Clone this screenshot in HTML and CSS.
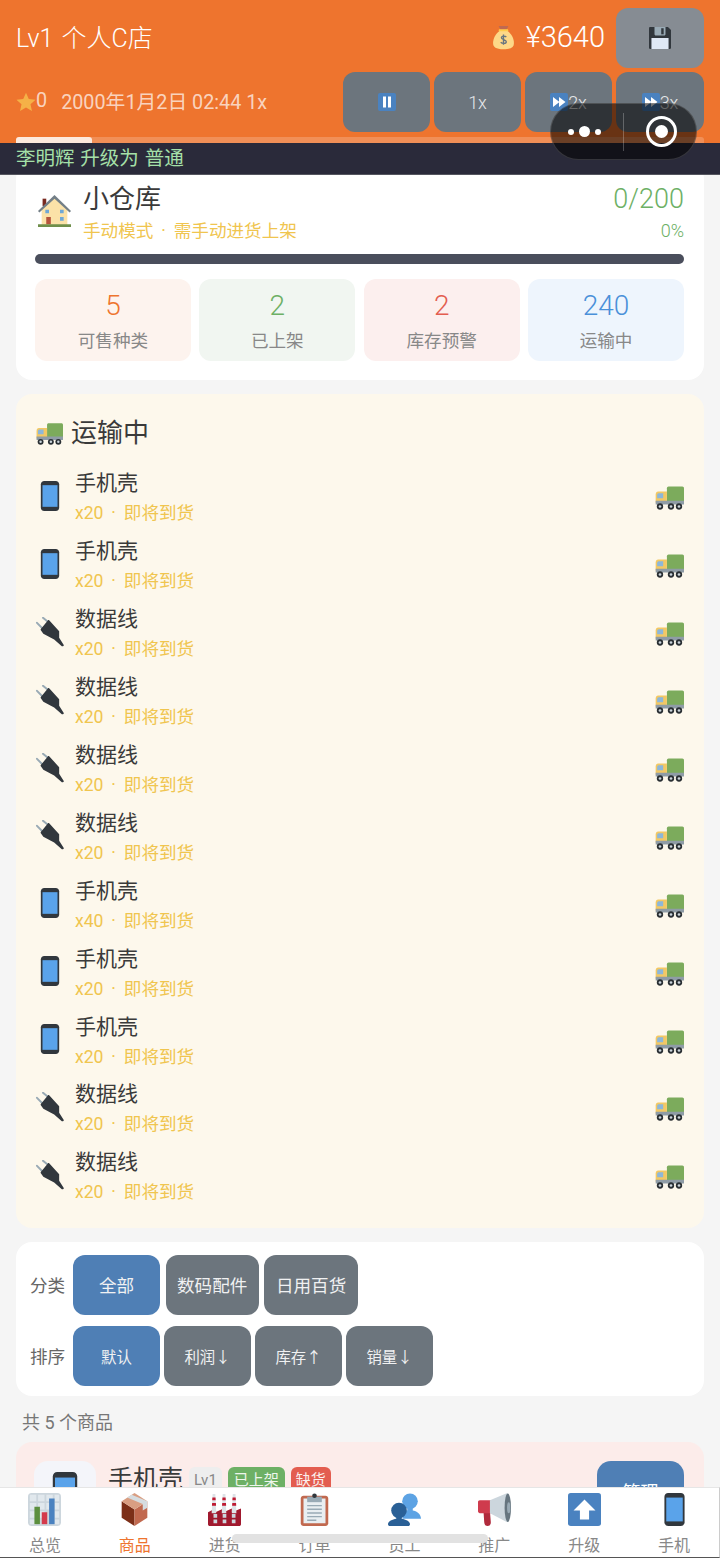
FILE: index.html
```html
<!DOCTYPE html>
<html lang="zh-CN">
<head>
    <meta charset="UTF-8">
    <meta name="viewport" content="width=device-width, initial-scale=1.0">
    <title>Lv1 个人C店</title>
    <link rel="stylesheet" href="styles.css">
</head>
<body>
    <svg class="sprites" xmlns="http://www.w3.org/2000/svg">
        <symbol id="i-phone" viewBox="0 0 36 36">
            <path fill="#31373D" d="M11 36c-2.200 0-4-1.800-4-4V4c0-2.200 1.800-4 4-4h14c2.200 0 4 1.800 4 4v28c0 2.200-1.800 4-4 4H11z"/>
            <path fill="#5AA3EA" d="M9 5h18v26H9z"/>
        </symbol>
        <symbol id="i-plug" viewBox="0 0 36 36">
            <path fill="none" stroke="#99AAB5" stroke-width="2.4" stroke-linecap="round" d="M2.400 7 12 16.800M9.600 1 16.800 7"/>
            <path fill="#31373D" d="M17 4 29 17v8l5.500 8.500c.5.8-1.500 2.200-2.300 1.500L23 27 10 20l-3-4c-.4-.6-.4-1.200 0-1.600L15.400 4.200c.5-.6 1.100-.6 1.600-.2z"/>
        </symbol>
        <symbol id="i-truck" viewBox="0 0 36 36">
            <path fill="#7CAB5C" d="M17.500 5.500H34c1.100 0 2 .9 2 2V25H15.500V7.500c0-1.100.9-2 2-2z"/>
            <path fill="#F2C864" d="M5 11.500h10.500V25H2v-10c0-2 1.200-3.500 3-3.500z"/>
            <path fill="#8DB7D9" d="M5.500 13.500h5.500v6H3.800v-3.500c0-1.200.6-2.500 1.700-2.500z"/>
            <path fill="#8F9CA6" d="M2 22.500h34V27H2z"/>
            <g fill="#292F33"><circle cx="7.200" cy="29.400" r="3.800"/><circle cx="20.400" cy="29.400" r="3.800"/><circle cx="30" cy="29.400" r="3.800"/></g>
            <g fill="#CCD6DD"><circle cx="7.200" cy="29.400" r="1.600"/><circle cx="20.400" cy="29.400" r="1.600"/><circle cx="30" cy="29.400" r="1.600"/></g>
        </symbol>
        <symbol id="i-house" viewBox="0 0 36 36">
            <path fill="#FBE2A8" d="M4 16 18 3l14 13v17H4z"/>
            <path fill="#7A2A20" d="M5 4h4v8H5z"/>
            <path fill="#737F87" d="M18 0 0 17.500l1.500 1.700L18 4l16.500 15.200 1.500-1.700z"/>
            <g fill="#6FA8D6"><path d="M8 16h4v4H8zM24 16h4v4h-4zM24 24h4v4h-4z"/></g>
            <path fill="#B5533C" d="M9 24h5v8H9z"/>
            <path fill="#6F8F4B" d="M0 32h36v3H0z"/>
        </symbol>
        <symbol id="i-money" viewBox="0 0 36 36">
            <path fill="#FDD888" d="M13 8h10c6 4 10 11 10 18 0 6-4 9-15 9S3 32 3 26c0-7 4-14 10-18z"/>
            <path fill="#BF6952" d="M12 1.500h12c.8 0 1 1 .5 1.500L22 7H14l-2.500-4c-.5-.5-.3-1.500.5-1.500z"/>
            <path fill="#FFCC4D" d="M12.500 6h11c.8 0 1.500.7 1.500 1.500S24.300 9 23.500 9h-11C11.700 9 11 8.300 11 7.500S11.700 6 12.500 6z"/>
            <path fill="none" stroke="#67757F" stroke-width="2" d="M22 17.500c-1-1.500-6.500-2.500-7 .8-.4 3.200 7 2.200 7 5.700 0 3.300-6 3-8 1M18 13.500v15"/>
        </symbol>
        <symbol id="i-floppy" viewBox="0 0 36 36">
            <path fill="#31373D" d="M2 0h29l5 5v29c0 1.100-.9 2-2 2H2c-1.100 0-2-.9-2-2V2C0 .9.900 0 2 0z"/>
            <path fill="#99AAB5" d="M9 0h18v12c0 1.100-.9 2-2 2H11c-1.100 0-2-.9-2-2z"/>
            <path fill="#31373D" d="M20 2h4v10h-4z"/>
            <path fill="#DFE8F5" d="M4 18h28v18H4z"/>
        </symbol>
        <symbol id="i-pause" viewBox="0 0 36 36">
            <rect width="36" height="36" rx="4" fill="#4A82C0"/>
            <path fill="#fff" d="M10 7h6v22h-6zM20 7h6v22h-6z"/>
        </symbol>
        <symbol id="i-fast" viewBox="0 0 36 36">
            <rect width="36" height="36" rx="4" fill="#4A82C0"/>
            <path fill="#fff" d="M6 8l13 10L6 28zM18 8l13 10-13 10z"/>
        </symbol>
        <symbol id="i-star" viewBox="0 0 36 36">
            <path fill="#F7BC4C" d="M18 1.500l5 11.200 12.200 1.300-9.100 8.200 2.600 12L18 28l-10.700 6.200 2.600-12L.8 14 13 12.700z"/>
        </symbol>
        <symbol id="i-chart" viewBox="0 0 36 36">
            <rect width="36" height="36" rx="4" fill="#CCD6DD"/>
            <path fill="#E1E8ED" d="M2 2h7v7H2zM11 2h7v7h-7zM20 2h7v7h-7zM29 2h5v7h-5zM2 11h7v7H2zM11 11h7v7h-7zM20 11h7v7h-7zM29 11h5v7h-5zM2 20h7v7H2zM11 20h7v7h-7zM29 20h5v7h-5zM2 29h7v5H2zM29 29h5v5h-5z"/>
            <path fill="#5C8F3F" d="M7 15h6v19H7z"/>
            <path fill="#D43A4C" d="M15 21h6v13h-6z"/>
            <path fill="#4A82C0" d="M23 6h6v28h-6z"/>
        </symbol>
        <symbol id="i-box" viewBox="0 0 36 36">
            <path fill="#7C2F18" d="M18 36 4 27V9l14 9z"/>
            <path fill="#C1694F" d="M18 36l14-9V9l-14 9z"/>
            <path fill="#D99E82" d="M18 0 4 9l14 9 14-9z"/>
            <path fill="#D5DCE0" d="M10 5 15 2l17 7v7l-5 3v-7z"/>
        </symbol>
        <symbol id="i-factory" viewBox="0 0 36 36">
            <path fill="#A0192E" d="M0 21l8-4v4l9-4v4l9-4v4l10-4v17c0 1.100-.9 2-2 2H2c-1.100 0-2-.9-2-2z"/>
            <path fill="#DDE3E7" d="M5 1h3l1 21H4zM16 1h3l1 21h-5zM27 1h3l1 21h-5z"/>
            <path fill="#BE1931" d="M4.800 5h3.400l.2 3H4.600zM4.500 11h4.100l.2 3H4.300zM15.800 5h3.400l.2 3h-3.800zM15.500 11h4.100l.2 3h-4.500zM26.800 5h3.400l.2 3h-3.800zM26.500 11h4.100l.2 3h-4.500z"/>
            <path fill="#CCD6DD" d="M6 23h4v4H6zM16 23h4v4h-4zM26 23h4v4h-4zM6 29h4v4H6zM16 29h4v4h-4zM26 29h4v4h-4z"/>
        </symbol>
        <symbol id="i-clip" viewBox="0 0 36 36">
            <path fill="#C1694F" d="M6 3h24c1.700 0 3 1.300 3 3v27c0 1.700-1.300 3-3 3H6c-1.700 0-3-1.300-3-3V6c0-1.700 1.300-3 3-3z"/>
            <path fill="#E9EEF1" d="M6 6h24v27H6z"/>
            <path fill="#99AAB5" d="M10 4h16v6H10z"/>
            <circle cx="18" cy="3" r="2.500" fill="#31373D"/>
            <path fill="#99AAB5" d="M10 13h16v1.500H10zM10 17h16v1.500H10zM10 21h16v1.500H10zM10 25h16v1.500H10zM10 29h10v1.500H10z"/>
        </symbol>
        <symbol id="i-people" viewBox="0 0 36 36">
            <circle cx="24" cy="9" r="8.500" fill="#5DA3E4"/>
            <path fill="#5DA3E4" d="M21 14h6v5c4 .7 9 3.500 9 9H16c0-5 2-8.500 5-9z"/>
            <circle cx="12" cy="19" r="8.500" fill="#2A6096"/>
            <path fill="#2A6096" d="M9 24h6v4c4 .7 9 2.500 9 6 0 1.100-.9 2-2 2H2c-1.100 0-2-.9-2-2 0-3.500 5-5.300 9-6z"/>
        </symbol>
        <symbol id="i-horn" viewBox="0 0 36 36">
            <path fill="#B02A3C" d="M6 20h7l1 12c.2 2-1 4-3.500 4S7 34.500 6.800 32z"/>
            <path fill="#CF3B4D" d="M2 8h13v14H2c-1.100 0-2-.9-2-2V10c0-1.100.9-2 2-2z"/>
            <path fill="#CCD6DD" d="M13 8 32 0v32L13 22z"/>
            <ellipse cx="32.500" cy="16" rx="3.500" ry="15.500" fill="#66757F"/>
            <ellipse cx="33.500" cy="16" rx="1.800" ry="6" fill="#99AAB5"/>
        </symbol>
        <symbol id="i-up" viewBox="0 0 36 36">
            <rect width="36" height="36" rx="3" fill="#4A82C0"/>
            <path fill="#fff" d="M18 7 30 19h-7v10H13V19H6z"/>
        </symbol>
    </svg>

    <header class="topbar">
        <div class="topbar-row">
            <div class="shop-name">Lv1 个人C店</div>
            <div class="money"><svg class="emoji money-icon"><use href="#i-money"/></svg><span>¥3640</span></div>
            <button class="ctl-btn save-btn"><svg class="emoji save-icon"><use href="#i-floppy"/></svg></button>
        </div>
        <div class="topbar-row">
            <div class="status"><svg class="emoji star-icon"><use href="#i-star"/></svg>0<span class="status-date">2000年1月2日 02:44 1x</span></div>
            <div class="speed-btns">
                <button class="ctl-btn"><svg class="emoji speed-icon"><use href="#i-pause"/></svg></button>
                <button class="ctl-btn">1x</button>
                <button class="ctl-btn"><svg class="emoji speed-icon"><use href="#i-fast"/></svg>2x</button>
                <button class="ctl-btn"><svg class="emoji speed-icon"><use href="#i-fast"/></svg>3x</button>
            </div>
        </div>
        <div class="day-progress"><div class="day-progress-fill" style="width: 11%"></div></div>
    </header>
    <div class="ticker">李明辉 升级为 普通</div>

    <main class="content">
        <section class="card warehouse">
            <div class="wh-head">
                <svg class="emoji wh-icon"><use href="#i-house"/></svg>
                <div class="wh-info">
                    <div class="wh-name">小仓库</div>
                    <div class="wh-mode">手动模式 · 需手动进货上架</div>
                </div>
                <div class="wh-usage">
                    <div class="wh-count">0/200</div>
                    <div class="wh-percent">0%</div>
                </div>
            </div>
            <div class="wh-bar"></div>
            <div class="stats">
                <div class="stat stat-orange"><div class="stat-value">5</div><div class="stat-label">可售种类</div></div>
                <div class="stat stat-green"><div class="stat-value">2</div><div class="stat-label">已上架</div></div>
                <div class="stat stat-red"><div class="stat-value">2</div><div class="stat-label">库存预警</div></div>
                <div class="stat stat-blue"><div class="stat-value">240</div><div class="stat-label">运输中</div></div>
            </div>
        </section>

        <section class="transit">
            <h2 class="transit-title"><svg class="emoji transit-title-icon"><use href="#i-truck"/></svg>运输中</h2>
            <div class="transit-row"><svg class="emoji row-icon"><use href="#i-phone"/></svg><div class="row-text"><div class="row-name">手机壳</div><div class="row-sub">x20 · 即将到货</div></div><svg class="emoji row-truck"><use href="#i-truck"/></svg></div>
            <div class="transit-row"><svg class="emoji row-icon"><use href="#i-phone"/></svg><div class="row-text"><div class="row-name">手机壳</div><div class="row-sub">x20 · 即将到货</div></div><svg class="emoji row-truck"><use href="#i-truck"/></svg></div>
            <div class="transit-row"><svg class="emoji row-icon"><use href="#i-plug"/></svg><div class="row-text"><div class="row-name">数据线</div><div class="row-sub">x20 · 即将到货</div></div><svg class="emoji row-truck"><use href="#i-truck"/></svg></div>
            <div class="transit-row"><svg class="emoji row-icon"><use href="#i-plug"/></svg><div class="row-text"><div class="row-name">数据线</div><div class="row-sub">x20 · 即将到货</div></div><svg class="emoji row-truck"><use href="#i-truck"/></svg></div>
            <div class="transit-row"><svg class="emoji row-icon"><use href="#i-plug"/></svg><div class="row-text"><div class="row-name">数据线</div><div class="row-sub">x20 · 即将到货</div></div><svg class="emoji row-truck"><use href="#i-truck"/></svg></div>
            <div class="transit-row"><svg class="emoji row-icon"><use href="#i-plug"/></svg><div class="row-text"><div class="row-name">数据线</div><div class="row-sub">x20 · 即将到货</div></div><svg class="emoji row-truck"><use href="#i-truck"/></svg></div>
            <div class="transit-row"><svg class="emoji row-icon"><use href="#i-phone"/></svg><div class="row-text"><div class="row-name">手机壳</div><div class="row-sub">x40 · 即将到货</div></div><svg class="emoji row-truck"><use href="#i-truck"/></svg></div>
            <div class="transit-row"><svg class="emoji row-icon"><use href="#i-phone"/></svg><div class="row-text"><div class="row-name">手机壳</div><div class="row-sub">x20 · 即将到货</div></div><svg class="emoji row-truck"><use href="#i-truck"/></svg></div>
            <div class="transit-row"><svg class="emoji row-icon"><use href="#i-phone"/></svg><div class="row-text"><div class="row-name">手机壳</div><div class="row-sub">x20 · 即将到货</div></div><svg class="emoji row-truck"><use href="#i-truck"/></svg></div>
            <div class="transit-row"><svg class="emoji row-icon"><use href="#i-plug"/></svg><div class="row-text"><div class="row-name">数据线</div><div class="row-sub">x20 · 即将到货</div></div><svg class="emoji row-truck"><use href="#i-truck"/></svg></div>
            <div class="transit-row"><svg class="emoji row-icon"><use href="#i-plug"/></svg><div class="row-text"><div class="row-name">数据线</div><div class="row-sub">x20 · 即将到货</div></div><svg class="emoji row-truck"><use href="#i-truck"/></svg></div>
        </section>

        <section class="card filters">
            <div class="filter-row filter-cats">
                <span class="filter-label">分类</span>
                <button class="filter-btn active">全部</button>
                <button class="filter-btn">数码配件</button>
                <button class="filter-btn">日用百货</button>
            </div>
            <div class="filter-row filter-sorts">
                <span class="filter-label">排序</span>
                <button class="filter-btn active">默认</button>
                <button class="filter-btn">利润↓</button>
                <button class="filter-btn">库存↑</button>
                <button class="filter-btn">销量↓</button>
            </div>
        </section>

        <div class="goods-count">共 5 个商品</div>

        <section class="goods-card">
            <div class="goods-thumb"><svg class="emoji goods-icon"><use href="#i-phone"/></svg></div>
            <div class="goods-title">
                <span class="goods-name">手机壳</span>
                <span class="tag tag-level">Lv1</span>
                <span class="tag tag-on">已上架</span>
                <span class="tag tag-low">缺货</span>
            </div>
            <button class="manage-btn">管理</button>
        </section>
    </main>

    <nav class="tabbar">
        <div class="tab"><svg class="emoji tab-icon"><use href="#i-chart"/></svg><span>总览</span></div>
        <div class="tab tab-active"><svg class="emoji tab-icon"><use href="#i-box"/></svg><span>商品</span></div>
        <div class="tab"><svg class="emoji tab-icon"><use href="#i-factory"/></svg><span>进货</span></div>
        <div class="tab"><svg class="emoji tab-icon"><use href="#i-clip"/></svg><span>订单</span></div>
        <div class="tab"><svg class="emoji tab-icon"><use href="#i-people"/></svg><span>员工</span></div>
        <div class="tab"><svg class="emoji tab-icon"><use href="#i-horn"/></svg><span>推广</span></div>
        <div class="tab"><svg class="emoji tab-icon"><use href="#i-up"/></svg><span>升级</span></div>
        <div class="tab"><svg class="emoji tab-icon"><use href="#i-phone"/></svg><span>手机</span></div>
    </nav>

    <div class="capsule">
        <div class="capsule-more"><i></i><i class="big"></i><i></i></div>
        <div class="capsule-line"></div>
        <div class="capsule-close"><i></i></div>
    </div>
    <div class="home-bar"></div>
</body>
</html>
```

FILE: styles.css
```css
* {
    margin: 0;
    padding: 0;
    box-sizing: border-box;
}

body {
    font-family: Roboto, 'Noto Sans CJK SC', sans-serif;
    background: #f5f5f5;
    color: #3a3a3a;
    height: 100vh;
    display: flex;
    flex-direction: column;
    overflow: hidden;
    position: relative;
}

button {
    font-family: inherit;
    border: none;
}

.sprites {
    display: none;
}

.emoji {
    display: block;
    flex-shrink: 0;
}

/* top bar */
.topbar {
    background: #ee742e;
    color: white;
    padding-top: 8px;
    flex-shrink: 0;
}

.topbar-row {
    display: flex;
    align-items: center;
    padding: 0 16px;
    margin-bottom: 4px;
    height: 60px;
}

.shop-name {
    flex: 1;
    font-size: 25px;
    font-weight: 300;
    word-spacing: 2px;
    padding-bottom: 4px;
}

.money {
    display: flex;
    align-items: center;
    gap: 10px;
    font-size: 29px;
    font-weight: 300;
    margin-right: 11px;
    padding-bottom: 2px;
}

.money-icon {
    width: 25px;
    height: 25px;
}

.ctl-btn {
    width: 87px;
    height: 60px;
    border-radius: 12px;
    background: #6c757d;
    color: #e6e8ea;
    font-size: 18px;
    font-weight: 300;
    display: flex;
    align-items: center;
    justify-content: center;
}

.ctl-btn:last-child {
    width: 88px;
}

.save-btn {
    background: #868c93;
}

.save-icon {
    width: 22px;
    height: 22px;
}

.speed-icon {
    width: 18px;
    height: 18px;
}

.status {
    flex: 1;
    display: flex;
    align-items: center;
    font-size: 19.8px;
    color: rgba(255, 255, 255, 0.7);
    padding-bottom: 3px;
}

.star-icon {
    width: 20px;
    height: 20px;
    margin-top: 2px;
    opacity: 0.85;
}

.status-date {
    margin-left: 14px;
}

.speed-btns {
    display: flex;
    gap: 4px;
}

.day-progress {
    height: 6px;
    margin: 5px 16px 0;
    background: rgba(255, 255, 255, 0.2);
    border-radius: 3px 3px 0 0;
}

.day-progress-fill {
    height: 100%;
    background: rgba(255, 255, 255, 0.8);
    border-radius: 3px 3px 0 0;
}

.ticker {
    height: 32px;
    line-height: 31px;
    padding-left: 16px;
    background: #2a2a3a;
    border-bottom: 1px solid #55565f;
    color: #a5e0a8;
    font-size: 19.5px;
    word-spacing: 1px;
    flex-shrink: 0;
    position: relative;
    z-index: 1;
}

/* content */
.content {
    flex: 1;
    min-height: 0;
    overflow: hidden;
    padding: 0 16px;
}

.card {
    background: white;
    border-radius: 16px;
}

.warehouse {
    margin-top: -12px;
    padding: 18px 20px 19px 19px;
}

.wh-head {
    display: flex;
    align-items: flex-start;
    height: 63px;
}

.wh-icon {
    width: 33px;
    height: 35px;
    margin: 13px 12px 0 3px;
}

.wh-info {
    flex: 1;
}

.wh-name {
    font-size: 26px;
    line-height: 36px;
}

.wh-mode {
    font-size: 17.6px;
    line-height: 28px;
    word-spacing: 3.5px;
    color: #f0c54f;
}

.wh-usage {
    text-align: right;
}

.wh-count {
    font-size: 27px;
    font-weight: 300;
    line-height: 36px;
    color: #6db065;
}

.wh-percent {
    font-size: 18px;
    font-weight: 300;
    line-height: 28px;
    color: #6db065;
}

.wh-bar {
    height: 10px;
    margin-top: 10px;
    border-radius: 5px;
    background: #4a4e5c;
}

.stats {
    display: grid;
    grid-template-columns: repeat(4, 1fr);
    gap: 8.5px;
    margin-top: 15px;
}

.stat {
    height: 82px;
    border-radius: 12px;
    text-align: center;
    padding-top: 9px;
}

.stat-value {
    font-size: 28px;
    font-weight: 300;
    line-height: 36px;
}

.stat-label {
    font-size: 17.6px;
    line-height: 28px;
    margin-top: 3px;
    color: #888;
}

.stat-orange { background: #fdf3ee; }
.stat-orange .stat-value { color: #ee742e; }
.stat-green { background: #f1f6f1; }
.stat-green .stat-value { color: #6db065; }
.stat-red { background: #fcefee; }
.stat-red .stat-value { color: #e35d50; }
.stat-blue { background: #eef5fd; }
.stat-blue .stat-value { color: #4a90d9; }

/* in transit */
.transit {
    margin-top: 14px;
    padding: 20px 20px 17px 19px;
    background: #fdf8ec;
    border-radius: 16px;
}

.transit-title {
    display: flex;
    align-items: center;
    font-size: 26px;
    font-weight: 400;
    line-height: 38px;
    margin-bottom: 12px;
}

.transit-title-icon {
    width: 28px;
    height: 28px;
    margin-right: 8px;
}

.transit-row {
    display: flex;
    align-items: center;
    height: 67.9px;
}

.row-icon {
    width: 30px;
    height: 30px;
    margin: 0 10px 4px 0;
}

.row-text {
    flex: 1;
}

.row-name {
    font-size: 21px;
    line-height: 30px;
}

.row-sub {
    font-size: 17.6px;
    line-height: 28px;
    word-spacing: 3.5px;
    color: #f0c54f;
    padding-top: 1px;
}

.row-truck {
    width: 30px;
    height: 30px;
    margin-bottom: 1px;
}

/* filters */
.filters {
    margin-top: 14px;
    padding: 13px 14px 10px;
}

.filter-row {
    display: flex;
    align-items: center;
}

.filter-cats {
    gap: 5.5px;
    margin-bottom: 11px;
}

.filter-sorts {
    gap: 4px;
}

.filter-label {
    font-size: 17.6px;
    color: #666;
    width: 43px;
    margin-right: -5.5px;
}

.filter-sorts .filter-label {
    margin-right: -4px;
}

.filter-btn {
    min-width: 87px;
    height: 60px;
    padding: 0 11.5px;
    border-radius: 12px;
    background: #6c757d;
    color: #f0f1f2;
    font-size: 17.6px;
}

.filter-sorts .filter-btn {
    font-size: 15.4px;
}

.filter-btn.active {
    background: #4f7fb5;
}

.goods-count {
    font-size: 18px;
    line-height: 26px;
    color: #777;
    padding-left: 6px;
    margin: 14px 0 6px;
}

.goods-card {
    display: flex;
    align-items: flex-start;
    padding: 19px 20px 19px 18px;
    height: 120px;
    background: #fcecea;
    border-radius: 16px;
}

.goods-thumb {
    width: 62px;
    height: 62px;
    margin-right: 12px;
    padding-top: 11px;
    border-radius: 14px;
    background: #f4f5fa;
    display: flex;
    justify-content: center;
}

.goods-icon {
    width: 40px;
    height: 40px;
}

.goods-title {
    flex: 1;
    display: flex;
    align-items: flex-start;
    gap: 6px;
    height: 36px;
}

.goods-name {
    font-size: 25px;
    line-height: 38px;
}

.tag {
    font-size: 15px;
    line-height: 26px;
    margin-top: 6px;
    padding: 0 6px;
    border-radius: 6px;
}

.tag-level {
    background: #eee;
    color: #888;
    padding: 0 5px;
}

.tag-on {
    background: #6db065;
    color: #eef6ec;
}

.tag-low {
    background: #e35d50;
    color: #fbeeec;
    padding: 0 5px;
}

.manage-btn {
    width: 87px;
    height: 60px;
    border-radius: 14px;
    background: #4f7fb5;
    color: white;
    font-size: 18px;
}

/* tab bar */
.tabbar {
    height: 71px;
    display: grid;
    grid-template-columns: repeat(8, 1fr);
    background: white;
    border-top: 1px solid #e6e6e6;
    border-bottom: 1px solid #555;
    border-right: 1px solid #ccc;
    flex-shrink: 0;
}

.tab {
    display: flex;
    flex-direction: column;
    align-items: center;
    padding-top: 5px;
    font-size: 16px;
    color: #888;
}

.tab span {
    margin-top: 8px;
    line-height: 24px;
}

.tab-icon {
    width: 33px;
    height: 33px;
}

.tab-active {
    color: #ee742e;
}

/* wechat capsule, sits over the page */
.capsule {
    position: absolute;
    left: 550px;
    top: 103px;
    width: 147px;
    height: 57px;
    display: flex;
    align-items: center;
    border-radius: 29px;
    background: rgba(0, 0, 0, 0.56);
    border: 1px solid rgba(255, 255, 255, 0.15);
    z-index: 5;
}

.capsule-more {
    width: 72px;
    display: flex;
    align-items: center;
    justify-content: center;
    gap: 5px;
    padding-right: 5px;
}

.capsule-more i {
    width: 6px;
    height: 6px;
    border-radius: 50%;
    background: white;
}

.capsule-more i.big {
    width: 11px;
    height: 11px;
}

.capsule-line {
    width: 1px;
    height: 38px;
    background: rgba(255, 255, 255, 0.25);
}

.capsule-close {
    flex: 1;
    display: flex;
    justify-content: center;
    padding-left: 2px;
}

.capsule-close i {
    width: 31px;
    height: 31px;
    border-radius: 50%;
    border: 3.5px solid white;
    display: flex;
    align-items: center;
    justify-content: center;
}

.capsule-close i::after {
    content: "";
    width: 13px;
    height: 13px;
    border-radius: 50%;
    background: white;
}

.home-bar {
    position: absolute;
    left: 232px;
    top: 1534px;
    width: 256px;
    height: 9px;
    border-radius: 5px;
    background: #e2e2e2;
    z-index: 5;
}
```
